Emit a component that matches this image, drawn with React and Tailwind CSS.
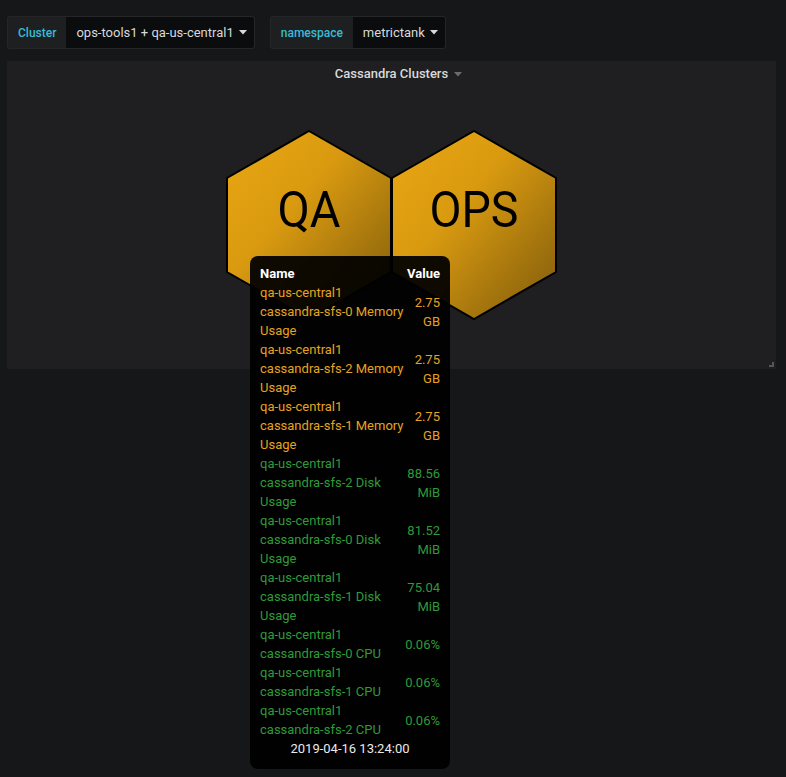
import { useState } from 'react';

const rows = [
    { name: ['qa-us-central1', 'cassandra-sfs-0 Memory', 'Usage'], value: ['2.75', 'GB'], color: 'text-[#e5a41f]' },
    { name: ['qa-us-central1', 'cassandra-sfs-2 Memory', 'Usage'], value: ['2.75', 'GB'], color: 'text-[#e5a41f]' },
    { name: ['qa-us-central1', 'cassandra-sfs-1 Memory', 'Usage'], value: ['2.75', 'GB'], color: 'text-[#e5a41f]' },
    { name: ['qa-us-central1', 'cassandra-sfs-2 Disk', 'Usage'], value: ['88.56', 'MiB'], color: 'text-[#2f9a3a]' },
    { name: ['qa-us-central1', 'cassandra-sfs-0 Disk', 'Usage'], value: ['81.52', 'MiB'], color: 'text-[#2f9a3a]' },
    { name: ['qa-us-central1', 'cassandra-sfs-1 Disk', 'Usage'], value: ['75.04', 'MiB'], color: 'text-[#2f9a3a]' },
    { name: ['qa-us-central1', 'cassandra-sfs-0 CPU'], value: ['0.06%'], color: 'text-[#2f9a3a]' },
    { name: ['qa-us-central1', 'cassandra-sfs-1 CPU'], value: ['0.06%'], color: 'text-[#2f9a3a]' },
    { name: ['qa-us-central1', 'cassandra-sfs-2 CPU'], value: ['0.06%'], color: 'text-[#2f9a3a]' },
];

function Caret({ className = '' }) {
    return (
        <svg width="8" height="5" viewBox="0 0 8 5" className={className}>
            <path d="M0 0 L8 0 L4 4.5 Z" fill="currentColor" />
        </svg>
    );
}

function Variable({ label, value }) {
    return (
        <div className="flex h-[33px] items-stretch">
            <div className="flex items-center rounded-l-[3px] border border-r-0 border-[#262628] bg-[#1e1f21] px-[10px] text-[12px] font-medium text-[#37bcd6]">
                {label}
            </div>
            <div className="flex items-center gap-[5px] rounded-r-[3px] border border-l-0 border-[#262628] bg-[#0b0c0e] pl-[10px] pr-[7px] text-[13px] text-[#d8d9da]">
                {value}
                <Caret className="text-[#d8d9da]" />
            </div>
        </div>
    );
}

function Hexes() {
    // pointy-top hexagons, width 164, height 188
    const hex = (cx) => {
        const cy = 95;
        const w = 82;
        return [
            [cx, cy - 94],
            [cx + w, cy - 47],
            [cx + w, cy + 47],
            [cx, cy + 94],
            [cx - w, cy + 47],
            [cx - w, cy - 47],
        ].map((p) => p.join(',')).join(' ');
    };

    return (
        <svg width="332" height="192" viewBox="0 0 332 192">
            <defs>
                <linearGradient id="hexfill" x1="0" y1="0" x2="1" y2="1">
                    <stop offset="0" stopColor="#eaa712" />
                    <stop offset="0.4" stopColor="#d99a10" />
                    <stop offset="1" stopColor="#7d5a0c" />
                </linearGradient>
            </defs>
            <polygon points={hex(83)} fill="url(#hexfill)" stroke="#000" strokeWidth="2" />
            <polygon points={hex(248)} fill="url(#hexfill)" stroke="#000" strokeWidth="2" />
            <text x="83" y="97" textAnchor="middle" fontFamily="Roboto, sans-serif" fontSize="50" fill="#000" textLength="63" lengthAdjust="spacingAndGlyphs">QA</text>
            <text x="248" y="97" textAnchor="middle" fontFamily="Roboto, sans-serif" fontSize="50" fill="#000" textLength="89" lengthAdjust="spacingAndGlyphs">OPS</text>
        </svg>
    );
}

export default function App() {
    const [hover] = useState(true);

    return (
        <div className="relative min-h-[777px] w-[786px] bg-[#161719] font-['Roboto',sans-serif]">
            <div className="flex gap-[15px] px-[7px] pt-[16px]">
                <Variable label="Cluster" value="ops-tools1 + qa-us-central1" />
                <Variable label="namespace" value="metrictank" />
            </div>

            <div className="relative mx-[7px] mt-[12px] mr-[10px] flex h-[308px] flex-col items-center bg-[#1f1f21]">
                <div className="flex h-[26px] items-center gap-[6px] pl-[14px] text-[13px] font-medium text-[#d8d9da]">
                    Cassandra Clusters
                    <Caret className="text-[#6c6c6c]" />
                </div>
                <div className="mt-[43px] ml-[1px]">
                    <Hexes />
                </div>
                <div className="absolute right-[2px] bottom-[2px] h-[5px] w-[5px] border-r-2 border-b-2 border-[#555]" />
            </div>

            {hover && (
                <div className="absolute top-[256px] left-[250px] w-[200px] rounded-[8px] bg-[#000000]/[0.93] px-[10px] pt-[8px] pb-[11px] text-[13px] leading-[19px]">
                    <div className="flex justify-between font-bold text-white">
                        <span>Name</span>
                        <span>Value</span>
                    </div>
                    {rows.map((r, i) => (
                        <div key={i} className={`flex items-center justify-between ${r.color}`}>
                            <div className="w-[146px]">
                                {r.name.map((l, j) => (
                                    <div key={j}>{l}</div>
                                ))}
                            </div>
                            <div className="text-right">
                                {r.value.map((l, j) => (
                                    <div key={j}>{l}</div>
                                ))}
                            </div>
                        </div>
                    ))}
                    <div className="text-center text-[#e9e9e9]">2019-04-16 13:24:00</div>
                </div>
            )}
        </div>
    );
}
